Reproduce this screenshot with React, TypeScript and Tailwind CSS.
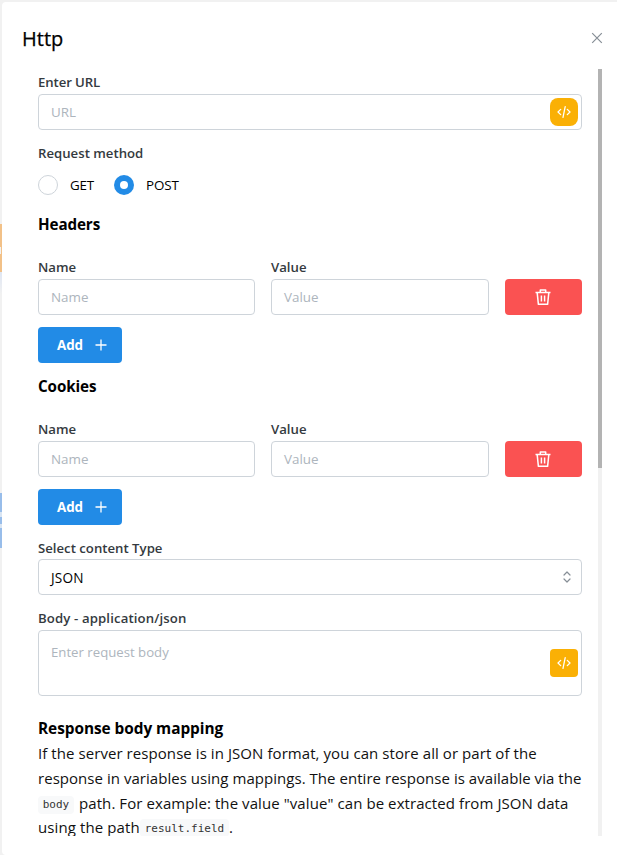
import type { ReactNode } from "react";

const inputBox = "rounded-[4px] border border-[#ced4da] bg-white";

function Label({ children, className = "" }: { children: ReactNode; className?: string }) {
  return (
    <div className={`h-[22px] whitespace-nowrap text-[13.2px] font-semibold leading-[22px] text-[#343a40] ${className}`}>
      {children}
    </div>
  );
}

function CodeButton({ className = "" }: { className?: string }) {
  return (
    <button className={`flex size-7 shrink-0 items-center justify-center bg-[#fab005] ${className}`}>
      <svg width="14" height="14" viewBox="0 0 14 14" fill="none" stroke="white" strokeWidth="1.3" strokeLinecap="round" strokeLinejoin="round">
        <path d="M3.7 4.4 1 7l2.7 2.6M10.3 4.4 13 7l-2.7 2.6M8.2 1.7 6 12.3" />
      </svg>
    </button>
  );
}

function TrashIcon() {
  return (
    <svg className="mr-[1px]" width="16" height="18" viewBox="0 0 16 18" fill="none" stroke="white" strokeWidth="1.5" strokeLinejoin="round">
      <path d="M.5 4.6h15M5.3 4.4V1.9h5.4v2.5M2.2 4.8l1.2 11.5h9.2l1.2-11.5" />
      <path d="M6.4 7.4v6M9.6 7.4v6" />
    </svg>
  );
}

function Field({ name, className }: { name: string; className: string }) {
  return (
    <div className={className}>
      <Label>{name}</Label>
      <div className={`mt-[1px] flex h-9 items-center px-3 pt-[1px] text-[13.4px] text-[#adb5bd] ${inputBox}`}>{name}</div>
    </div>
  );
}

function PairEditor({ title }: { title: string }) {
  return (
    <section>
      <h2 className="h-[25px] text-[15.2px] font-bold leading-[26px] tracking-[-0.1px]">{title}</h2>
      <div className="mt-5 flex items-end gap-4">
        <Field name="Name" className="w-[217px]" />
        <Field name="Value" className="w-[218px]" />
        <button className="flex h-9 flex-1 items-center justify-center rounded-[4px] bg-[#fa5252]">
          <TrashIcon />
        </button>
      </div>
      <button className="mt-3 flex h-9 w-[84px] items-center rounded-[4px] bg-[#228be6] pl-[19px] text-[13.4px] font-bold text-white">
        <span className="w-[38px] pt-[1px] text-left tracking-[-0.1px]">Add</span>
        <svg width="12" height="12" viewBox="0 0 12 12" stroke="white" strokeWidth="1.3">
          <path d="M6 .5v11M.5 6h11" />
        </svg>
      </button>
    </section>
  );
}

export default function App() {
  return (
    <div className="flex h-[855px] w-[617px] overflow-hidden bg-[#f1f1f1] pt-[2px] font-['Open_Sans','Noto_Sans',sans-serif] text-black">
      <div className="flex w-[2px] shrink-0 flex-col">
        <div className="mt-[222px] flex h-12 shrink-0 items-center bg-[#f2c188]">
          <span className="mt-1 h-[7px] w-[1px] bg-[#f1f1f1]" />
        </div>
        <div className="h-[221px] shrink-0 bg-gradient-to-b from-[#dfe6f3] via-[#f1f1f1] via-10% to-[#f1f1f1]" />
        <div className="flex h-[55px] shrink-0 flex-col bg-[#98bdea]">
          <div className="mt-[19px] h-[5px] bg-[#d9e5f3]" />
          <div className="mt-[7px] h-1 bg-[#d9e5f3]" />
        </div>
      </div>
      <div className="flex flex-1 flex-col rounded-l-[4px] bg-white">
        <header className="flex h-[67px] shrink-0 items-center justify-between pl-5 pr-[14px] pt-[6px]">
          <h1 className="text-[20px] leading-[30px] [-webkit-text-stroke:0.25px_black]">Http</h1>
          <svg className="-mt-[1px]" width="12" height="12" viewBox="0 0 12 12" fill="none" stroke="#868e96" strokeWidth="1.2">
            <path d="m1.2 1.2 9.6 9.6M10.8 1.2l-9.6 9.6" />
          </svg>
        </header>
        <div className="flex h-[767px] overflow-hidden">
          <main className="ml-9 w-[544px] shrink-0 pt-[2px]">
            <Label className="tracking-[-0.1px]">Enter URL</Label>
            <div className={`mt-[1px] flex h-9 items-center justify-between pl-3 pr-[3px] text-[13.4px] text-[#adb5bd] ${inputBox}`}>
              <span className="pt-[1px]">URL</span>
              <CodeButton className="rounded-[8px]" />
            </div>
            <Label className="mt-3">Request method</Label>
            <div className="mt-[11px] flex h-5 items-center text-[13.4px]">
              <span className="size-5 rounded-full border border-[#ced4da]" />
              <span className="ml-3 w-11 pt-[1px] tracking-[-0.2px]">GET</span>
              <span className="flex size-5 items-center justify-center rounded-full bg-[#228be6]">
                <span className="size-2 rounded-full bg-white" />
              </span>
              <span className="ml-3 pt-[1px] tracking-[-0.1px]">POST</span>
            </div>
            <div className="mt-4">
              <PairEditor title="Headers" />
            </div>
            <div className="mt-[10px]">
              <PairEditor title="Cookies" />
            </div>
            <Label className="mt-3">Select content Type</Label>
            <div className={`flex h-9 items-center justify-between pl-3 pr-[10px] text-[13.6px] ${inputBox}`}>
              <span className="pt-[2px] tracking-[0.2px]">JSON</span>
              <svg width="8" height="12" viewBox="0 0 8 12" fill="none" stroke="#868e96" strokeWidth="1.2" strokeLinecap="round" strokeLinejoin="round">
                <path d="M1 4l3-3 3 3M1 8l3 3 3-3" />
              </svg>
            </div>
            <Label className="mt-3 tracking-[0.12px]">Body - application/json</Label>
            <div className={`mt-[1px] flex h-[66px] items-center justify-between pl-3 pr-[3px] text-[13.2px] text-[#adb5bd] ${inputBox}`}>
              <span className="mb-[21px]">Enter request body</span>
              <CodeButton className="rounded-[4px]" />
            </div>
            <h2 className="mt-5 h-[25px] text-[15.4px] font-bold leading-[26px] tracking-[-0.05px]">Response body mapping</h2>
            <div className="whitespace-nowrap text-[15px] leading-[24.8px] text-[#111]">
              <div className="tracking-[0.07px]">If the server response is in JSON format, you can store all or part of the</div>
              <div className="tracking-[0.04px]">response in variables using mappings. The entire response is available via the</div>
              <div className="flex">
                <code className="mr-[5px] mt-[5px] flex h-[18px] w-9 shrink-0 items-center justify-center rounded-[4px] bg-[#f8f9fa] font-['DejaVu_Sans_Mono',monospace] text-[11px] leading-none text-[#333]">body</code>
                <span className="tracking-[0.08px]">path. For example: the value "value" can be extracted from JSON data</span>
              </div>
              <div className="flex">
                <span className="w-[102px] tracking-[0.1px]">using the path</span>
                <code className="flex h-[18px] w-[89px] shrink-0 translate-y-1 items-center justify-center rounded-[4px] bg-[#f8f9fa] pt-[1px] font-['DejaVu_Sans_Mono',monospace] text-[11px] leading-none text-[#333]">result.field</code>
                <span>.</span>
              </div>
            </div>
          </main>
          <div className="ml-4 w-1 bg-[#f1f1f1]">
            <div className="h-[399px] bg-[#b3b3b3]" />
          </div>
        </div>
      </div>
    </div>
  );
}
